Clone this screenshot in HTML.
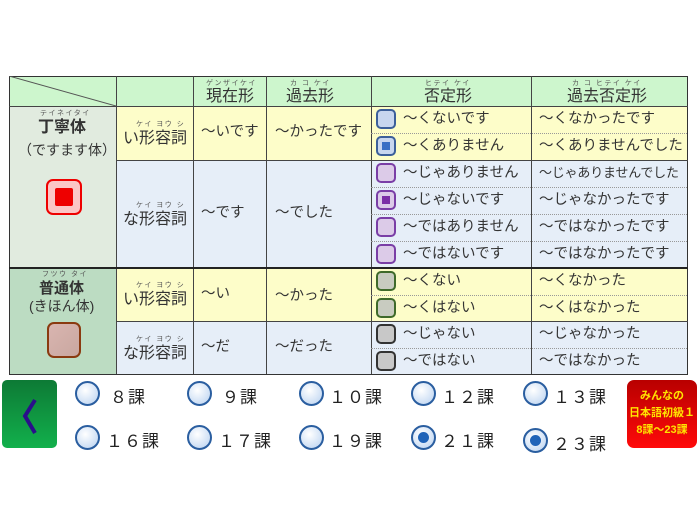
<!DOCTYPE html>
<html><head><meta charset="utf-8"><style>
body{margin:0;width:700px;height:525px;background:#fff;position:relative;overflow:hidden;font-family:"Liberation Sans","Noto Sans CJK JP",sans-serif;color:#333}
.c{position:absolute;box-sizing:border-box;font-size:14.5px;line-height:1}
.t{position:absolute;white-space:nowrap}
.r{position:absolute;font-size:7px;line-height:1;color:#555;letter-spacing:1.5px;white-space:nowrap}
.v{position:absolute;background:#444;width:1px}
.h{position:absolute;height:0;border-top:1px dotted #999}
.hl{position:absolute;height:1px;background:#444}
.cb{position:absolute;width:20px;height:20px;border-radius:5px;box-sizing:border-box;border:2px solid}
.rad{position:absolute;width:25px;height:25px;border-radius:50%;border:2px solid #2a5ea0;box-sizing:border-box;background:radial-gradient(circle at 40% 35%,#fff,#c6daf3 80%)}
.rad.on::after{content:"";position:absolute;left:5px;top:5px;width:11px;height:11px;border-radius:50%;background:#1f63b8}
.lab{position:absolute;font-size:17px;letter-spacing:1px;color:#222}
</style></head><body>
<div class="c" style="left:9px;top:76px;width:678px;height:30px;background:#cdf6cd"></div>
<div class="c" style="left:9px;top:106px;width:107px;height:162px;background:#e1ebdf"></div>
<div class="c" style="left:9px;top:268px;width:107px;height:106px;background:#bcdcc2"></div>
<div class="c" style="left:116px;top:106px;width:571px;height:54px;background:#fdfdc9"></div>
<div class="c" style="left:116px;top:160px;width:571px;height:108px;background:#e6eef8"></div>
<div class="c" style="left:116px;top:268px;width:571px;height:53px;background:#fdfdc9"></div>
<div class="c" style="left:116px;top:321px;width:571px;height:53px;background:#e6eef8"></div>
<div class="c" style="left:9px;top:76px;width:679px;height:299px;border:1px solid #333"></div>
<svg style="position:absolute;left:9px;top:76px" width="107" height="30"><line x1="0" y1="0" x2="107" y2="30" stroke="#555" stroke-width="1"/></svg>
<div class="v" style="left:116px;top:76px;height:298px"></div>
<div class="v" style="left:193px;top:76px;height:298px"></div>
<div class="v" style="left:266px;top:76px;height:298px"></div>
<div class="v" style="left:371px;top:76px;height:298px"></div>
<div class="v" style="left:531px;top:76px;height:298px"></div>
<div class="hl" style="left:9px;top:106px;width:679px"></div>
<div class="hl" style="left:116px;top:160px;width:572px"></div>
<div class="hl" style="left:9px;top:267px;width:679px;height:2px;background:#222"></div>
<div class="hl" style="left:116px;top:321px;width:572px"></div>
<div class="h" style="left:371px;top:133px;width:316px"></div>
<div class="h" style="left:371px;top:187px;width:316px"></div>
<div class="h" style="left:371px;top:214px;width:316px"></div>
<div class="h" style="left:371px;top:241px;width:316px"></div>
<div class="h" style="left:371px;top:295px;width:316px"></div>
<div class="h" style="left:371px;top:348px;width:316px"></div>
<div class="r" style="left:206px;top:80px">ゲンザイケイ</div>
<div class="t c" style="left:206px;top:89px;font-size:16px">現在形</div>
<div class="r" style="left:290px;top:80px">カ コ ケイ</div>
<div class="t c" style="left:286px;top:89px;font-size:16px">過去形</div>
<div class="r" style="left:425px;top:80px">ヒテイ ケイ</div>
<div class="t c" style="left:424px;top:89px;font-size:16px">否定形</div>
<div class="r" style="left:572px;top:80px">カ コ ヒテイ ケイ</div>
<div class="t c" style="left:567px;top:89px;font-size:16px">過去否定形</div>
<div class="r" style="left:40px;top:110px">テイネイタイ</div>
<div class="t c" style="left:38px;top:120px;font-size:16px;font-weight:bold">丁寧体</div>
<div class="t c" style="left:18px;top:143px;font-size:14px">（ですます体）</div>
<div style="position:absolute;left:46px;top:179px;width:36px;height:36px;border:2px solid #e00;border-radius:7px;box-sizing:border-box;background:#fbc6c6"><div style="position:absolute;left:7px;top:7px;width:18px;height:18px;background:#e00;border-radius:2px"></div></div>
<div class="r" style="left:42px;top:271px">フツウ タイ</div>
<div class="t c" style="left:39px;top:281px;font-size:15px;font-weight:bold">普通体</div>
<div class="t c" style="left:29px;top:299px;font-size:14px">(きほん体)</div>
<div style="position:absolute;left:47px;top:322px;width:34px;height:36px;border:2px solid #8a3a10;border-radius:7px;box-sizing:border-box;background:linear-gradient(135deg,#d9b5b0,#c9a7a0)"></div>
<div class="r" style="left:136px;top:121px">ケイ ヨウ シ</div>
<div class="t c" style="left:123px;top:131px;font-size:16px">い形容詞</div>
<div class="r" style="left:136px;top:202px">ケイ ヨウ シ</div>
<div class="t c" style="left:123px;top:212px;font-size:16px">な形容詞</div>
<div class="r" style="left:136px;top:282px">ケイ ヨウ シ</div>
<div class="t c" style="left:123px;top:292px;font-size:16px">い形容詞</div>
<div class="r" style="left:136px;top:336px">ケイ ヨウ シ</div>
<div class="t c" style="left:123px;top:346px;font-size:16px">な形容詞</div>
<div class="t c" style="left:201px;top:125px">～いです</div>
<div class="t c" style="left:275px;top:125px">～かったです</div>
<div class="t c" style="left:201px;top:206px">～です</div>
<div class="t c" style="left:275px;top:206px">～でした</div>
<div class="t c" style="left:201px;top:287px">～い</div>
<div class="t c" style="left:275px;top:289px">～かった</div>
<div class="t c" style="left:201px;top:340px">～だ</div>
<div class="t c" style="left:275px;top:340px">～だった</div>
<div class="cb" style="left:376px;top:109px;border-color:#3c5f9a;background:#c8d6ef"></div>
<div class="cb" style="left:376px;top:136px;border-color:#3c5f9a;background:#c8d6ef"><div style="position:absolute;left:4px;top:4px;width:8px;height:8px;background:#3a6fc4"></div></div>
<div class="cb" style="left:376px;top:163px;border-color:#7a3ea6;background:#dccbe8"></div>
<div class="cb" style="left:376px;top:190px;border-color:#7a3ea6;background:#dccbe8"><div style="position:absolute;left:4px;top:4px;width:8px;height:8px;background:#7b2fa6"></div></div>
<div class="cb" style="left:376px;top:217px;border-color:#7a3ea6;background:#dccbe8"></div>
<div class="cb" style="left:376px;top:244px;border-color:#7a3ea6;background:#dccbe8"></div>
<div class="cb" style="left:376px;top:271px;border-color:#3f6a2a;background:#c8cbc0"></div>
<div class="cb" style="left:376px;top:298px;border-color:#3f6a2a;background:#c8cbc0"></div>
<div class="cb" style="left:376px;top:324px;border-color:#333;background:#c8c8c8"></div>
<div class="cb" style="left:376px;top:351px;border-color:#333;background:#c8c8c8"></div>
<div class="t c" style="left:403px;top:112px">～くないです</div>
<div class="t c" style="left:403px;top:139px">～くありません</div>
<div class="t c" style="left:403px;top:166px">～じゃありません</div>
<div class="t c" style="left:403px;top:193px">～じゃないです</div>
<div class="t c" style="left:403px;top:220px">～ではありません</div>
<div class="t c" style="left:403px;top:247px">～ではないです</div>
<div class="t c" style="left:403px;top:274px">～くない</div>
<div class="t c" style="left:403px;top:301px">～くはない</div>
<div class="t c" style="left:403px;top:327px">～じゃない</div>
<div class="t c" style="left:403px;top:354px">～ではない</div>
<div class="t c" style="left:539px;top:112px">～くなかったです</div>
<div class="t c" style="left:539px;top:139px">～くありませんでした</div>
<div class="t c" style="left:539px;top:166px;font-size:13px;letter-spacing:-0.2px">～じゃありませんでした</div>
<div class="t c" style="left:539px;top:193px">～じゃなかったです</div>
<div class="t c" style="left:539px;top:220px">～ではなかったです</div>
<div class="t c" style="left:539px;top:247px">～ではなかったです</div>
<div class="t c" style="left:539px;top:274px">～くなかった</div>
<div class="t c" style="left:539px;top:301px">～くはなかった</div>
<div class="t c" style="left:539px;top:327px">～じゃなかった</div>
<div class="t c" style="left:539px;top:354px">～ではなかった</div>
<div style="position:absolute;left:2px;top:380px;width:55px;height:68px;border-radius:5px;background:linear-gradient(#0d7a35,#12b04c)"></div>
<svg style="position:absolute;left:2px;top:380px" width="55" height="68"><path d="M33 20 L23 36 L33 53" fill="none" stroke="#2a0f8a" stroke-width="4"/></svg>
<div style="position:absolute;left:627px;top:380px;width:70px;height:68px;border-radius:7px;background:linear-gradient(#b80000,#ff0a0a)"></div>
<div class="t" style="left:627px;top:388px;width:70px;text-align:center;font-size:11px;line-height:17px;font-weight:bold;color:#ffe400">みんなの<br>日本語初級１<br>8課～23課</div>
<div class="rad" style="left:75px;top:381px"></div><div class="lab" style="left:110px;top:383px">８課</div>
<div class="rad" style="left:187px;top:381px"></div><div class="lab" style="left:222px;top:383px">９課</div>
<div class="rad" style="left:299px;top:381px"></div><div class="lab" style="left:329px;top:383px">１０課</div>
<div class="rad" style="left:411px;top:381px"></div><div class="lab" style="left:441px;top:383px">１２課</div>
<div class="rad" style="left:523px;top:381px"></div><div class="lab" style="left:553px;top:383px">１３課</div>
<div class="rad" style="left:75px;top:425px"></div><div class="lab" style="left:106px;top:427px">１６課</div>
<div class="rad" style="left:187px;top:425px"></div><div class="lab" style="left:218px;top:427px">１７課</div>
<div class="rad" style="left:299px;top:425px"></div><div class="lab" style="left:329px;top:427px">１９課</div>
<div class="rad on" style="left:411px;top:425px"></div><div class="lab" style="left:441px;top:427px">２１課</div>
<div class="rad on" style="left:523px;top:428px"></div><div class="lab" style="left:553px;top:430px">２３課</div>
</body></html>
